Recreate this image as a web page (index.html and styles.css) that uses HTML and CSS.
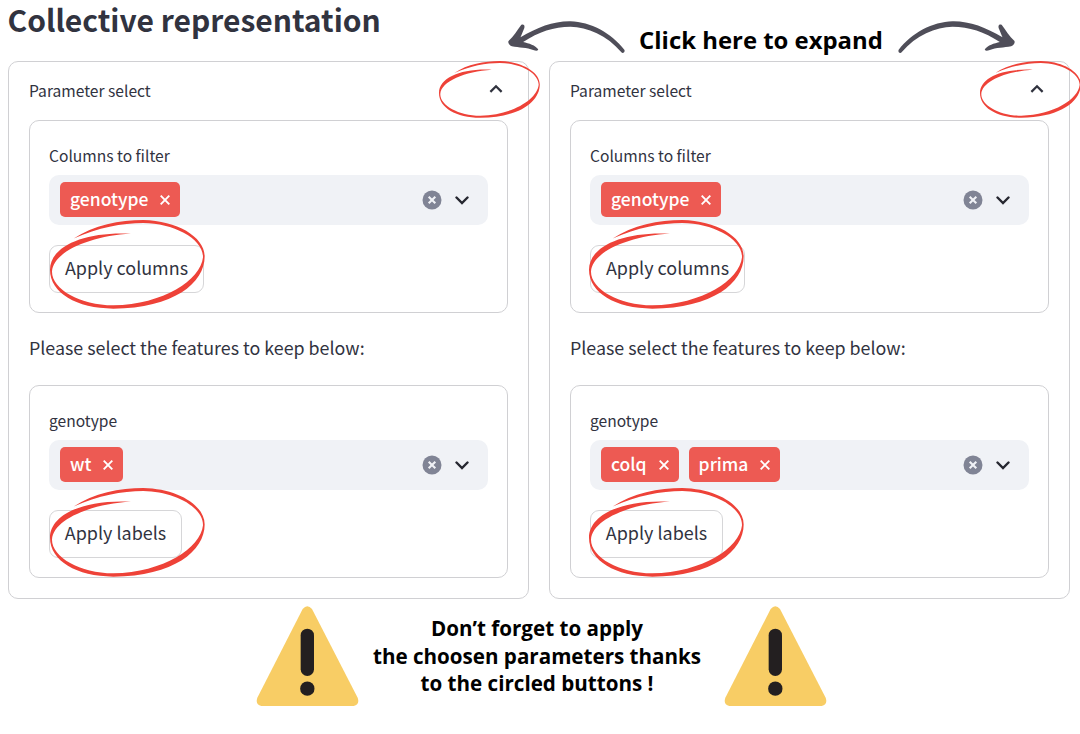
FILE: index.html
```
<!DOCTYPE html>
<html lang="en">
<head>
<meta charset="utf-8">
<title>Collective representation</title>
<link rel="stylesheet" href="styles.css">
</head>
<body>
<svg class="defs" width="0" height="0" aria-hidden="true">
  <symbol id="ring" viewBox="0 0 465 268" preserveAspectRatio="none"><path d="M71 56C130 15 210 0 280 0C380 2 464 50 464 110C464 190 370 266 190 267C80 266 0 220 0 150C0 80 100 34 243 41C120 49 10 95 6 155C5 208 90 257 190 257C340 254 452 180 459 112C459 55 370 10 280 9C215 9 145 23 71 56Z"/></symbol>
  <symbol id="arrow" viewBox="0 0 356 102"><path d="M4 63C20 50 30 30 42 15C50 11 55 18 50 28C45 40 42 48 40 52C90 22 140 3 190 4C250 6 312 38 352 90C354 98 346 102 342 96C300 45 240 22 190 20C140 20 95 35 48 66C65 70 85 76 93 88C93 94 85 92 78 90C60 83 35 83 14 79C5 75 2 68 4 63Z"/></symbol>
  <symbol id="warn" viewBox="0 0 307 300"><path fill="#f8cd65" d="M139 9Q153-8 167 9L304 275Q311 296 292 300H15Q-4 296 3 275Z"/><rect x="133" y="68" width="40" height="142" rx="20" fill="#231f20"/><circle cx="153" cy="248" r="21.500" fill="#231f20"/></symbol>
  <symbol id="up" viewBox="0 0 12 8"><path d="M1 7L6 2L11 7" fill="none" stroke="#31333f" stroke-width="2"/></symbol>
  <symbol id="down" viewBox="0 0 14 9"><path d="M1.500 1.500L7 7L12.500 1.500" fill="none" stroke="#262730" stroke-width="2.400" stroke-linecap="round"/></symbol>
  <symbol id="x" viewBox="0 0 10 10"><path d="M.7.7L9.300 9.300M9.300.7L.7 9.300" fill="none" stroke="#fff" stroke-width="1.900"/></symbol>
  <symbol id="clear" viewBox="0 0 20 20"><circle cx="10" cy="10" r="9.500" fill="#808495"/><path d="M6.700 6.700L13.300 13.300M13.300 6.700L6.700 13.300" stroke="#f0f2f6" stroke-width="2.100"/></symbol>
</svg>
<header class="top">
  <h1>Collective representation</h1>
  <svg class="arrow"><use href="#arrow"/></svg>
  <p class="hint">Click here to expand</p>
  <svg class="arrow flip"><use href="#arrow"/></svg>
</header>
<main class="panels">
  <section class="panel">
    <div class="expander"><span>Parameter select</span><svg class="up"><use href="#up"/></svg><svg class="ring ring-expand"><use href="#ring"/></svg></div>
    <div class="card">
      <label>Columns to filter</label>
      <div class="select"><span class="tag"><span>genotype</span><svg><use href="#x"/></svg></span><svg class="clear"><use href="#clear"/></svg><svg class="down"><use href="#down"/></svg></div>
      <button class="columns"><span>Apply columns</span><svg class="ring"><use href="#ring"/></svg></button>
    </div>
    <p class="note">Please select the features to keep below:</p>
    <div class="card">
      <label>genotype</label>
      <div class="select"><span class="tag"><span>wt</span><svg><use href="#x"/></svg></span><svg class="clear"><use href="#clear"/></svg><svg class="down"><use href="#down"/></svg></div>
      <button class="labels"><span>Apply labels</span><svg class="ring"><use href="#ring"/></svg></button>
    </div>
  </section>
  <section class="panel second">
    <div class="expander"><span>Parameter select</span><svg class="up"><use href="#up"/></svg><svg class="ring ring-expand"><use href="#ring"/></svg></div>
    <div class="card">
      <label>Columns to filter</label>
      <div class="select"><span class="tag"><span>genotype</span><svg><use href="#x"/></svg></span><svg class="clear"><use href="#clear"/></svg><svg class="down"><use href="#down"/></svg></div>
      <button class="columns"><span>Apply columns</span><svg class="ring"><use href="#ring"/></svg></button>
    </div>
    <p class="note">Please select the features to keep below:</p>
    <div class="card">
      <label>genotype</label>
      <div class="select"><span class="tag"><span>colq</span><svg><use href="#x"/></svg></span><span class="tag"><span>prima</span><svg><use href="#x"/></svg></span><svg class="clear"><use href="#clear"/></svg><svg class="down"><use href="#down"/></svg></div>
      <button class="labels"><span>Apply labels</span><svg class="ring"><use href="#ring"/></svg></button>
    </div>
  </section>
</main>
<footer class="reminder">
  <svg class="warn"><use href="#warn"/></svg>
  <p>Don’t forget to apply<br>the choosen parameters thanks<br>to the circled buttons !</p>
  <svg class="warn"><use href="#warn"/></svg>
</footer>
</body>
</html>
```
FILE: styles.css
```
* { box-sizing: border-box; }
body { margin: 0; width: 1080px; height: 734px; overflow: hidden; background: #fff; color: #31333f; font-family: "Noto Sans CJK SC", "Noto Sans", sans-serif; }
svg { display: block; flex: none; }
.defs { position: absolute; }
h1, p { margin: 0; white-space: nowrap; }
.top { display: flex; height: 61px; padding-left: 7.500px; }
h1 { width: 499px; height: 44px; font-size: 30px; line-height: 39px; font-weight: 700; }
.arrow { width: 119px; height: 34px; margin-top: 20px; fill: #4f4e59; }
.flip { transform: scaleX(-1); }
.hint { width: 271px; text-align: center; font: 700 23.900px/32px "Open Sans", sans-serif; color: #000; margin-top: 24px; }
.panels { display: flex; gap: 20px; padding-left: 8px; }
.panel { width: 521px; height: 538px; border: 1px solid #d0d0d3; border-radius: 10px; padding: 0 20px; }
.expander { position: relative; height: 58px; display: flex; align-items: center; justify-content: space-between; font-size: 15.600px; }
.expander span { padding-bottom: 2px; }
.up { width: 14px; height: 9px; margin: 0 5.500px 5px 0; }
.card { width: 479px; height: 193px; border: 1px solid #d0d0d3; border-radius: 10px; padding: 22px 0 0 19px; }
label { display: block; font-size: 15.600px; line-height: 24px; height: 32px; white-space: nowrap; }
.select { display: flex; align-items: center; width: 439px; height: 50px; padding: 0 19.500px 0 11px; border-radius: 10px; background: #f0f2f6; }
.tag { display: flex; align-items: center; gap: 12px; height: 35px; padding: 0 10px; margin: 0 10px 1px 0; border-radius: 5px; background: #ed5a53; color: #fff; font-size: 17.500px; font-weight: 500; }
.tag span { padding-bottom: 2px; }
.tag svg { width: 10px; height: 10px; margin-top: 1px; }
.clear { width: 20px; height: 20px; margin-left: auto; }
.down { width: 14px; height: 9px; margin-left: 13px; }
button { position: relative; display: block; height: 48px; margin: 20px 0 0; padding: 0 0 4px; border: 1px solid #d6d6d8; border-radius: 9px; background: #fff; color: inherit; font: inherit; font-size: 17.950px; white-space: nowrap; }
.columns { width: 155px; }
.labels { width: 133px; }
.ring { position: absolute; left: 0; top: -26px; width: 155px; height: 89px; fill: #ee4238; }
.labels .ring { top: -23px; }
.second button .ring { left: -2.500px; }
.ring-expand { left: 410px; top: -1px; width: 101px; height: 57px; }
.note { height: 72px; line-height: 68px; font-size: 17.850px; }
.reminder { display: flex; padding: 7px 0 0 256px; }
.warn { width: 103px; height: 100px; }
.reminder p { width: 365px; padding-right: 9px; margin-top: 9px; text-align: center; font: 700 20.600px/27.500px "Open Sans", sans-serif; color: #000; }
```
